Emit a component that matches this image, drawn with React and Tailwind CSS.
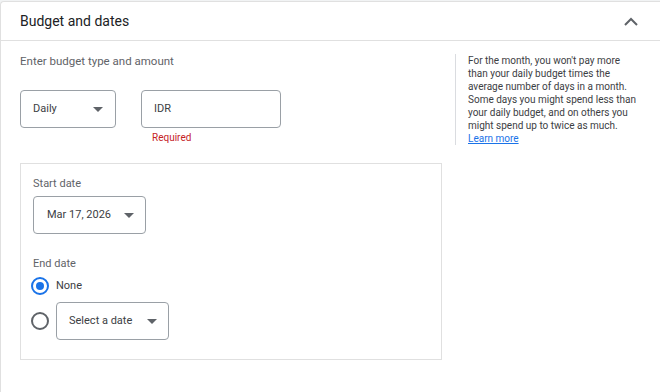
import React from 'react';

const font = { fontFamily: 'Roboto, "Liberation Sans", sans-serif' };

const helpLines = [
  "For the month, you won't pay more",
  'than your daily budget times the',
  'average number of days in a month.',
  'Some days you might spend less than',
  'your daily budget, and on others you',
  'might spend up to twice as much.',
];

const Caret = () => (
  <svg width="10" height="5" viewBox="0 0 10 5" className="shrink-0">
    <path d="M0 0 L10 0 L5 5 Z" fill="#5f6368" />
  </svg>
);

const SelectBox = ({ label, className, textPad }) => (
  <div className={`h-[38px] border border-[#9aa0a6] rounded-[4px] flex items-center justify-between ${className}`}>
    <span className={`text-[11px] text-[#3c4043] ${textPad}`}>{label}</span>
    <Caret />
  </div>
);

const Radio = ({ checked }) => (
  <div className={`w-[18px] h-[18px] shrink-0 rounded-full border-2 flex items-center justify-center ${checked ? 'border-[#1a73e8]' : 'border-[#5f6368]'}`}>
    {checked && <div className="w-[8px] h-[8px] rounded-full bg-[#1a73e8]" />}
  </div>
);

const App = () => {
  return (
    <div className="w-[660px] h-[392px] overflow-hidden bg-[#f1f3f4] pt-px" style={font}>
      <div className="bg-white border-l border-t border-[#e0e0e0] rounded-tl-[4px] h-[400px]">
        <div className="h-[39px] pl-[19px] pr-5 flex items-center justify-between border-b border-[#e0e0e0]">
          <span className="text-[14px] text-[#202124]">Budget and dates</span>
          <svg width="14" height="9" viewBox="0 0 14 9" className="mr-[2px]">
            <path d="M1 8 L7 2 L13 8" fill="none" stroke="#5f6368" strokeWidth="2" />
          </svg>
        </div>

        <div className="flex">
          <div className="w-[454px] pl-[19px] pt-[12px]">
            <div className="text-[11.5px] leading-[16px] text-[#5f6368]">Enter budget type and amount</div>
            <div className="flex mt-[21px] gap-[25px]">
              <SelectBox label="Daily" className="w-[96px] pr-[12px]" textPad="pl-[12px]" />
              <div>
                <div className="w-[140px] h-[38px] border border-[#9aa0a6] rounded-[4px] flex items-center pl-[12px] text-[11px] text-[#3c4043]">IDR</div>
                <div className="mt-[3px] pl-[11px] text-[10px] leading-[14px] text-[#c5221f]">Required</div>
              </div>
            </div>

            <div className="mt-[18px] w-[422px] border border-[#e0e0e0] pl-3 pt-[13px] pb-[19px]">
              <div className="text-[11px] leading-[14px] text-[#5f6368]">Start date</div>
              <SelectBox label="Mar 17, 2026" className="mt-[5px] w-[113px] pr-[11px]" textPad="pl-[13px]" />
              <div className="mt-[23px] text-[11px] leading-[14px] text-[#5f6368]">End date</div>
              <div className="mt-[5px] flex items-center h-[20px] -ml-[2px]">
                <Radio checked />
                <span className="ml-[7px] text-[11px] text-[#3c4043]">None</span>
              </div>
              <div className="mt-[6px] flex items-center -ml-[2px]">
                <Radio />
                <SelectBox label="Select a date" className="ml-[7px] w-[113px] pr-[11px]" textPad="pl-[12px]" />
              </div>
            </div>
          </div>

          <div className="mt-[13px] self-start border-l border-[#dadce0] pl-3">
            <div className="text-[10px] leading-[13px] text-[#3c4043] whitespace-nowrap">
              {helpLines.map((line) => (
                <div key={line}>{line}</div>
              ))}
              <a href="#" className="text-[#1a73e8] underline">Learn more</a>
            </div>
          </div>
        </div>
      </div>
    </div>
  );
};

export default App;
